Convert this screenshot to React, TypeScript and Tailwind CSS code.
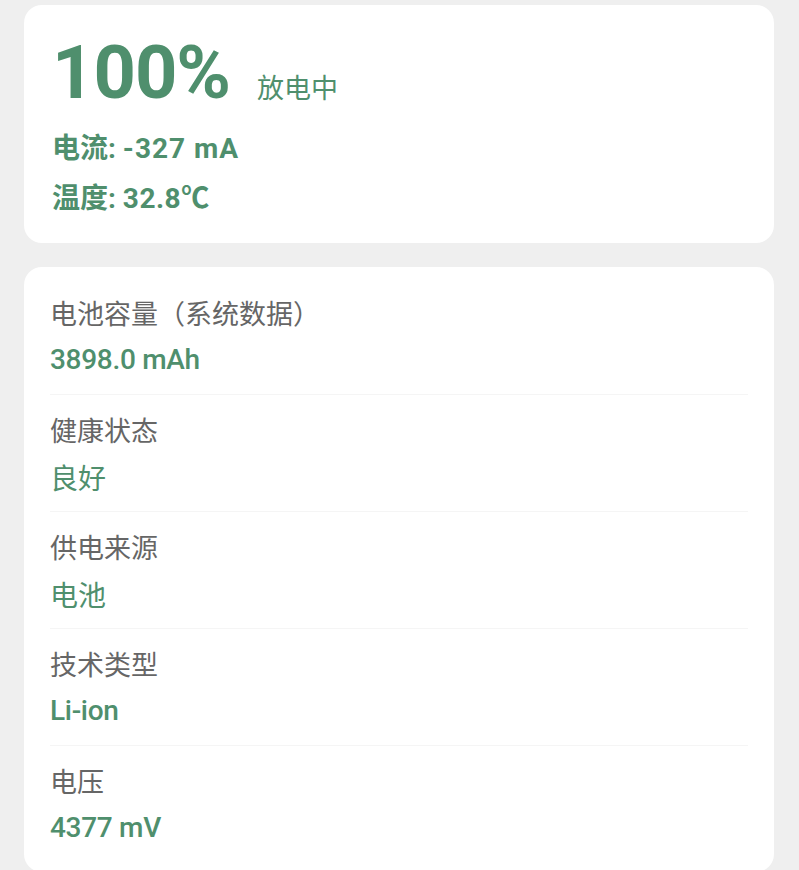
import React from 'react';

const LATIN = "font-['Roboto','Noto_Sans_CJK_SC',sans-serif]";

const ROWS: { label: string; value: string; cjk?: boolean }[] = [
  { label: '电池容量（系统数据）', value: '3898.0 mAh' },
  { label: '健康状态', value: '良好', cjk: true },
  { label: '供电来源', value: '电池', cjk: true },
  { label: '技术类型', value: 'Li-ion' },
  { label: '电压', value: '4377 mV' },
];

// ── SUMMARY CARD ───────────────────────────────────────────────
function SummaryCard() {
  return (
    <div className="bg-white rounded-[18px] pl-[28px] pr-6 pt-[31px] pb-[24px] h-[238px]">
      <div className="flex items-baseline">
        <span className={`${LATIN} text-[74px] leading-none font-bold text-[#4f8f6d] tracking-[-1px]`}>100%</span>
        <span className="ml-[27px] text-[27px] leading-none text-[#4f8f6d] font-['Noto_Sans_CJK_SC',sans-serif]">放电中</span>
      </div>
      <div className={`${LATIN} mt-[14px] text-[28px] leading-[50px] font-bold text-[#4f8f6d]`}>
        <div>
          电流: <span className="tracking-[1px]">-327 mA</span>
        </div>
        <div>
          温度: <span className="tracking-[0.5px]">32.8℃</span>
        </div>
      </div>
    </div>
  );
}

// ── DETAIL ROW ─────────────────────────────────────────────────
function DetailRow({ label, value, cjk, last }: { label: string; value: string; cjk?: boolean; last: boolean }) {
  return (
    <div className={`pt-[17px] pb-[16px] ${last ? '' : 'border-b border-[#f5f5f5]'}`}>
      <div className="text-[27px] leading-[36px] text-[#666666] font-['Noto_Sans_CJK_SC',sans-serif]">{label}</div>
      <div
        className={`mt-[11px] text-[28px] leading-[36px] text-[#4f8f6d] ${
          cjk ? "font-['Noto_Sans_CJK_SC',sans-serif]" : `${LATIN} font-medium tracking-[-0.3px]`
        }`}
      >
        {value}
      </div>
    </div>
  );
}

export default function App() {
  return (
    <div className="min-h-[870px] w-[799px] bg-[#efefef] pl-6 pr-[25px] pt-[5px] flex flex-col gap-6">
      <SummaryCard />
      <div className="bg-white rounded-[18px] px-[26px] pt-[11px] pb-[10px]">
        {ROWS.map((r, i) => (
          <DetailRow key={r.label} {...r} last={i === ROWS.length - 1} />
        ))}
      </div>
    </div>
  );
}
